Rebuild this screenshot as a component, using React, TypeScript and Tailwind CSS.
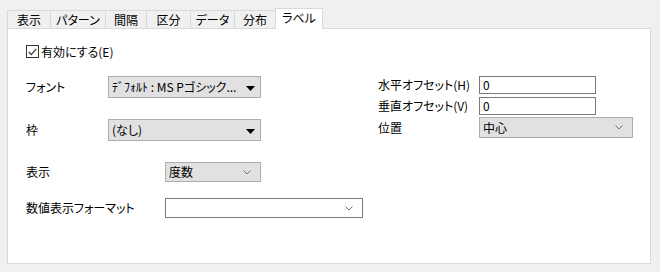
const font = "font-['Noto_Sans_CJK_JP',sans-serif] [font-feature-settings:'palt']"

const tabs = [
  { label: '表示', w: 'w-[43px]' },
  { label: 'パターン', w: 'w-[55px]' },
  { label: '間隔', w: 'w-[41px]' },
  { label: '区分', w: 'w-[44px]' },
  { label: 'データ', w: 'w-[44px]' },
  { label: '分布', w: 'w-[41px]' },
]

function Chevron() {
  return (
    <svg width="8" height="5" viewBox="0 0 8 5" className="shrink-0">
      <path d="M0.5 0.5 L4 4 L7.5 0.5" fill="none" stroke="#707070" strokeWidth="1" />
    </svg>
  )
}

function Triangle() {
  return (
    <svg width="9" height="5" viewBox="0 0 9 5" className="mt-[2px] shrink-0">
      <path d="M0 0 L9 0 L4.5 5 Z" fill="#000" />
    </svg>
  )
}

function LegacyCombo({ value, className }: { value: string; className: string }) {
  return (
    <div
      className={`flex items-center justify-between border border-[#adadad] bg-[#e1e1e1] pl-[3px] pr-[5px] text-[12px] text-black ${className}`}
    >
      <span className="truncate whitespace-nowrap">{value}</span>
      <Triangle />
    </div>
  )
}

function Combo({ value, className, white }: { value: string; className: string; white?: boolean }) {
  return (
    <div
      className={`flex items-center justify-between pl-[3px] pr-[9px] text-[12px] text-black ${
        white ? 'border border-[#7a7a7a] bg-white' : 'border border-[#adadad] bg-[#e1e1e1]'
      } ${className}`}
    >
      <span className="whitespace-nowrap">{value}</span>
      <Chevron />
    </div>
  )
}

function TextBox({ value }: { value: string }) {
  return (
    <div className="flex h-[18px] w-[117px] items-center border border-[#7a7a7a] bg-white pl-[3px] text-[12px]">
      {value}
    </div>
  )
}

export default function App() {
  return (
    <div className={`h-[272px] w-[660px] overflow-hidden bg-[#f0f0f0] px-[7px] pt-[8px] text-black ${font}`}>
      {/* tab strip */}
      <div className="flex h-[20px] items-end text-[12px]">
        {tabs.map(tab => (
          <div
            key={tab.label}
            className={`flex h-[18px] items-center justify-center border-l border-t border-[#d9d9d9] bg-[#f0f0f0] ${tab.w}`}
          >
            {tab.label}
          </div>
        ))}
        <div className="relative z-10 -mb-px flex h-[21px] w-[48px] items-center justify-center border-x border-t border-[#d9d9d9] bg-white pb-[2px]">
          ラベル
        </div>
      </div>

      {/* panel */}
      <div className="h-[236px] w-[644px] border border-[#d9d9d9] bg-white pl-[18px] pt-[16px] text-[12px]">
        <div className="flex h-[13px] items-center gap-[2px]">
          <div className="flex h-[13px] w-[13px] items-center justify-center border border-[#333] bg-white">
            <svg width="9" height="8" viewBox="0 0 9 8">
              <path d="M0.8 4 L3.3 6.6 L8.3 0.8" fill="none" stroke="#333" strokeWidth="1.2" />
            </svg>
          </div>
          <span className="leading-none">有効にする(E)</span>
        </div>

        <div className="mt-[18px] flex">
          {/* left column */}
          <div className="flex w-[352px] flex-col">
            <div className="flex h-[22px] items-center">
              <span className="w-[82px]">フォント</span>
              <LegacyCombo value="ﾃﾞﾌｫﾙﾄ : MS Pゴシック..." className="h-[22px] w-[153px]" />
            </div>
            <div className="mt-[21px] flex h-[22px] items-center">
              <span className="w-[82px]">枠</span>
              <LegacyCombo value="(なし)" className="h-[22px] w-[153px]" />
            </div>
            <div className="mt-[21px] flex h-[20px] items-center">
              <span className="w-[139px]">表示</span>
              <Combo value="度数" className="h-[20px] w-[96px]" />
            </div>
            <div className="mt-[16px] flex h-[20px] items-center">
              <span className="w-[139px]">数値表示フォーマット</span>
              <Combo value="" white className="h-[20px] w-[198px]" />
            </div>
          </div>

          {/* right column */}
          <div className="flex flex-col">
            <div className="flex h-[18px] items-center">
              <span className="w-[101px]">水平オフセット(H)</span>
              <TextBox value="0" />
            </div>
            <div className="mt-[3px] flex h-[18px] items-center">
              <span className="w-[101px]">垂直オフセット(V)</span>
              <TextBox value="0" />
            </div>
            <div className="mt-[2px] flex h-[21px] items-center">
              <span className="w-[101px]">位置</span>
              <Combo value="中心" className="h-[21px] w-[154px]" />
            </div>
          </div>
        </div>
      </div>
    </div>
  )
}
